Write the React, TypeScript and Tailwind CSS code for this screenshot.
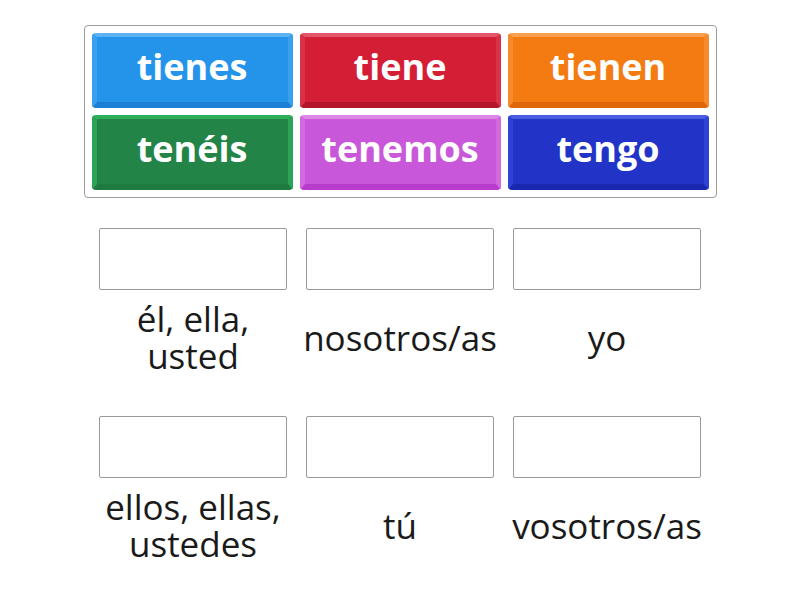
import React from 'react';

type Tile = {
  word: string;
  className: string;
};

const tiles: Tile[] = [
  {
    word: 'tienes',
    className:
      'bg-[#2493ea] border-t-[#5cb2f2] border-x-[#3aa0ee] border-b-[#1b7fd4]',
  },
  {
    word: 'tiene',
    className:
      'bg-[#d41e36] border-t-[#e2566a] border-x-[#d83248] border-b-[#b3162b]',
  },
  {
    word: 'tienen',
    className:
      'bg-[#f47a12] border-t-[#f8a050] border-x-[#f68a2c] border-b-[#e0660a]',
  },
  {
    word: 'tenéis',
    className:
      'bg-[#238448] border-t-[#2fae5c] border-x-[#2ba457] border-b-[#1e7a40]',
  },
  {
    word: 'tenemos',
    className:
      'bg-[#c957da] border-t-[#dc88e6] border-x-[#d06ade] border-b-[#b83ccc]',
  },
  {
    word: 'tengo',
    className:
      'bg-[#2234c8] border-t-[#4a5ce0] border-x-[#2e42d6] border-b-[#1a28ae]',
  },
];

const targets = [
  'él, ella, usted',
  'nosotros/as',
  'yo',
  'ellos, ellas, ustedes',
  'tú',
  'vosotros/as',
];

function WordTile({ word, className }: Tile) {
  return (
    <div
      className={`flex h-[75px] items-center justify-center rounded-[4px] border-t-[4px] border-b-[6px] border-x-[5px] pb-[5px] ${className}`}
    >
      <span className="text-[36px] font-bold leading-none text-white">
        {word}
      </span>
    </div>
  );
}

function Target({ label }: { label: string }) {
  return (
    <div className="flex w-[188px] flex-col">
      <div className="h-[62px] w-[188px] rounded-[2px] border border-[#9a9a9a] bg-white" />
      <div className="flex h-[94px] items-center justify-center text-center">
        <span className="text-[35px] leading-[37px] text-[#1a1a1a]">
          {label}
        </span>
      </div>
    </div>
  );
}

export default function App() {
  return (
    <div
      className="flex min-h-[600px] w-full flex-col items-center bg-white pt-[25px]"
      style={{ fontFamily: '"Open Sans", "Liberation Sans", sans-serif' }}
    >
      <div className="grid w-[633px] grid-cols-3 gap-[7px] rounded-[4px] border border-[#9b9b9b] p-[7px]">
        {tiles.map((t) => (
          <WordTile key={t.word} {...t} />
        ))}
      </div>

      <div className="mt-[30px] grid grid-cols-[188px_188px_188px] gap-x-[19px] gap-y-[32px]">
        {targets.map((label) => (
          <Target key={label} label={label} />
        ))}
      </div>
    </div>
  );
}
